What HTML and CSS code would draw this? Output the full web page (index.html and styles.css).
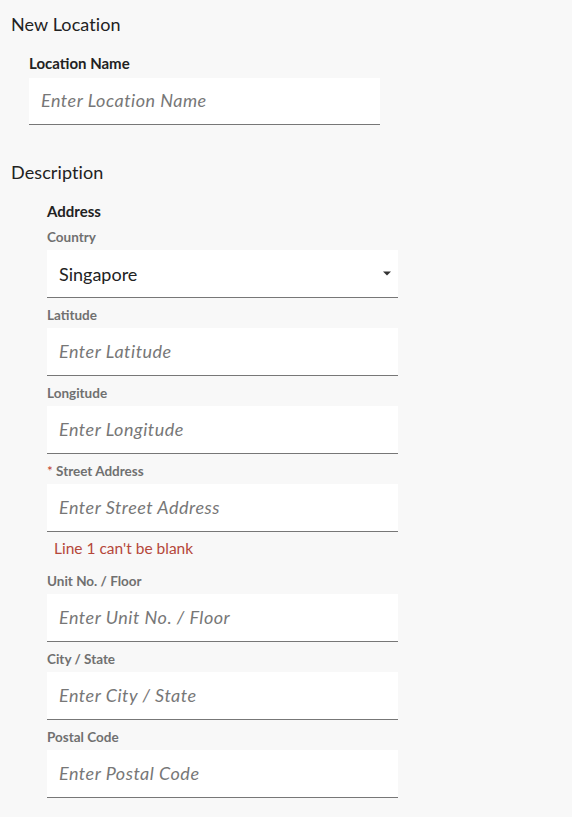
FILE: index.html
```html
<!DOCTYPE html>
<html lang="en">
<head>
<meta charset="utf-8">
<title>New Location</title>
<link rel="stylesheet" href="styles.css">
</head>
<body>
<div class="page">
  <h1 class="title">New Location</h1>
  <div class="top-field">
    <label class="name-label" for="locname">Location Name</label>
    <input class="input input-first" id="locname" type="text" placeholder="Enter Location Name">
  </div>

  <h2 class="title title-desc">Description</h2>
  <div class="address">
    <div class="address-title">Address</div>

    <div class="label label-first">Country</div>
    <div class="select">
      <span>Singapore</span>
      <svg class="caret" width="8" height="5" viewBox="0 0 8 5"><path d="M0 0.5H8L4 4.5Z" fill="#333"/></svg>
    </div>

    <div class="label">Latitude</div>
    <input class="input" type="text" placeholder="Enter Latitude">

    <div class="label">Longitude</div>
    <input class="input" type="text" placeholder="Enter Longitude">

    <div class="label"><span class="req">*</span> Street Address</div>
    <input class="input" type="text" placeholder="Enter Street Address">
    <div class="error">Line 1 can't be blank</div>

    <div class="label">Unit No. / Floor</div>
    <input class="input" type="text" placeholder="Enter Unit No. / Floor">

    <div class="label">City / State</div>
    <input class="input" type="text" placeholder="Enter City / State">

    <div class="label">Postal Code</div>
    <input class="input" type="text" placeholder="Enter Postal Code">
  </div>
</div>
</body>
</html>
```

FILE: styles.css
```css
html, body {
  margin: 0;
  padding: 0;
  background: #f8f8f8;
}

body {
  font-family: Lato, "Open Sans", Arial, sans-serif;
  color: #222;
}

.page {
  padding: 12px 11px 20px;
}

.title {
  margin: 0;
  font-size: 18px;
  line-height: 24px;
  font-weight: 400;
  letter-spacing: 0.1px;
  color: #222;
}

.title-desc {
  margin-top: 35px;
}

.top-field {
  margin-left: 18px;
  margin-top: 18px;
  display: flex;
  flex-direction: column;
  width: 351px;
}

.name-label {
  font-size: 15px;
  line-height: 18px;
  font-weight: 700;
  color: #222;
  margin-bottom: 6px;
}

.input {
  display: block;
  box-sizing: border-box;
  width: 351px;
  height: 48px;
  margin: 0;
  padding: 0 12px 2px;
  border: none;
  border-bottom: 1px solid #777;
  border-radius: 0;
  background: #fff;
  font-family: Lato, "Open Sans", Arial, sans-serif;
  font-size: 18px;
  letter-spacing: 0.5px;
  color: #222;
  outline: none;
}

.input-first {
  height: 47px;
}

.input::placeholder {
  font-style: italic;
  color: #777;
  opacity: 1;
}

.address {
  margin-left: 36px;
  margin-top: 18px;
  width: 351px;
}

.address-title {
  font-size: 15px;
  line-height: 18px;
  font-weight: 700;
  color: #222;
}

.label {
  font-size: 13.5px;
  line-height: 16px;
  font-weight: 700;
  color: #707070;
  margin: 9px 0 5px;
}

.label-first {
  margin-top: 9px;
  margin-bottom: 5px;
}

.req {
  color: #c0392b;
  font-weight: 400;
}

.select {
  box-sizing: border-box;
  height: 48px;
  padding: 0 6px 0 12px;
  background: #fff;
  border-bottom: 1px solid #777;
  display: flex;
  align-items: center;
  justify-content: space-between;
  font-size: 18px;
  color: #222;
}

.caret {
  display: block;
  margin-right: 1px;
}

.error {
  font-size: 15.5px;
  line-height: 20px;
  color: #b5473a;
  padding-left: 7px;
  margin: 6px 0 15px;
}
```
